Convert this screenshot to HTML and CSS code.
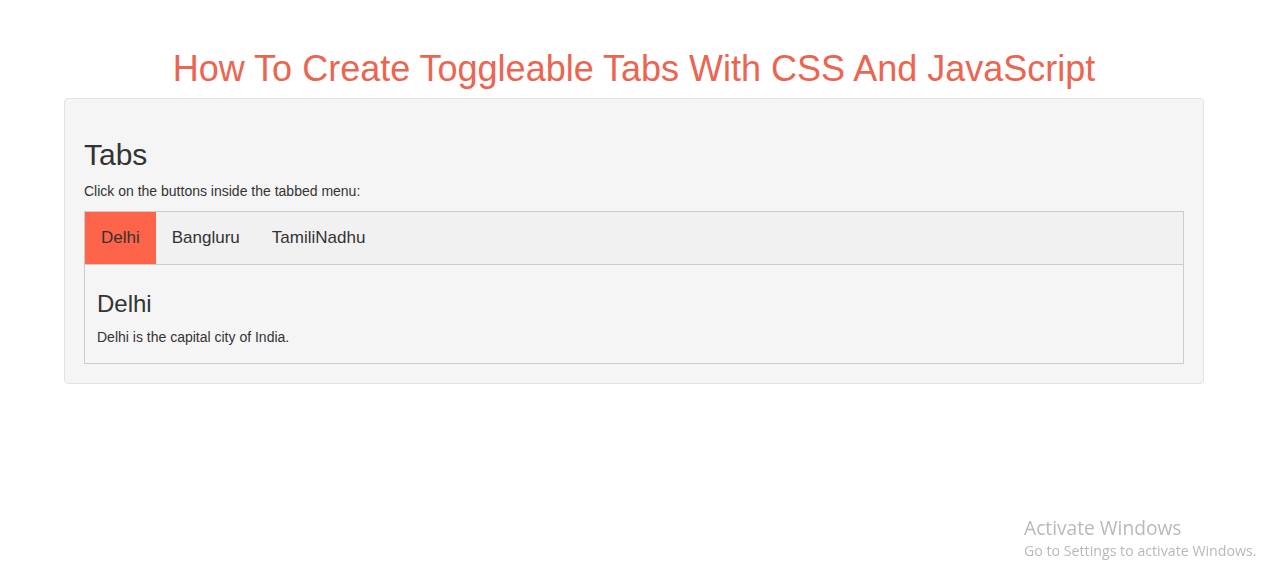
FILE: index.html
```html
<!DOCTYPE html>
<html lang="en">
<head>
<meta charset="utf-8">
<title>Toggleable Tabs</title>
<link rel="stylesheet" href="styles.css">
</head>
<body>
<div class="page">
  <h1 class="title">How To Create Toggleable Tabs With CSS And JavaScript</h1>
  <div class="well">
    <h2 class="heading">Tabs</h2>
    <p class="text">Click on the buttons inside the tabbed menu:</p>
    <div class="tab">
      <button class="tablink active">Delhi</button>
      <button class="tablink">Bangluru</button>
      <button class="tablink">TamiliNadhu</button>
    </div>
    <div class="tabcontent">
      <h3 class="subheading">Delhi</h3>
      <p class="text">Delhi is the capital city of India.</p>
    </div>
  </div>
</div>
<div class="watermark">
  <div class="wm-title">Activate Windows</div>
  <div class="wm-sub">Go to Settings to activate Windows.</div>
</div>
</body>
</html>
```
FILE: styles.css
```css
* { box-sizing: border-box; }
html, body { margin: 0; padding: 0; background: #fff; }
body {
  font-family: "Liberation Sans", Arial, sans-serif;
  font-size: 14px;
  line-height: 1.42857;
  color: #333;
}
.page {
  width: 1140px;
  margin-left: 64px;
  padding-top: 29px;
}
.title {
  margin: 20px 0 9px;
  font-size: 36px;
  font-weight: 500;
  line-height: 1.1;
  text-align: center;
  color: #eb6550;
}
.well {
  background: #f5f5f5;
  border: 1px solid #e3e3e3;
  border-radius: 4px;
  padding: 19px;
}
.heading {
  margin: 20px 0 10px;
  font-size: 30px;
  font-weight: 500;
  line-height: 1.1;
}
.text {
  margin: 0 0 10px;
  font-size: 14px;
  line-height: 20px;
}
.tab {
  display: flex;
  margin-top: 9px;
  border: 1px solid #ccc;
  background: #f1f1f1;
}
.tablink {
  font: inherit;
  font-size: 17px;
  line-height: 24px;
  color: #333;
  background: transparent;
  border: none;
  outline: none;
  padding: 14px 16px;
  margin: 0;
  cursor: pointer;
}
.tablink.active { background: #fe6449; }
.tabcontent {
  border: 1px solid #ccc;
  border-top: none;
  padding: 6px 12px;
}
.subheading {
  margin: 20px 0 10px;
  font-size: 24px;
  font-weight: 500;
  line-height: 1.1;
}
.watermark {
  position: fixed;
  left: 1024px;
  top: 515px;
  font-family: "Open Sans", "Noto Sans", sans-serif;
  color: #b9b9b9;
}
.wm-title { font-size: 19.2px; line-height: 26px; }
.wm-sub { font-size: 14.2px; line-height: 20px; }
```
